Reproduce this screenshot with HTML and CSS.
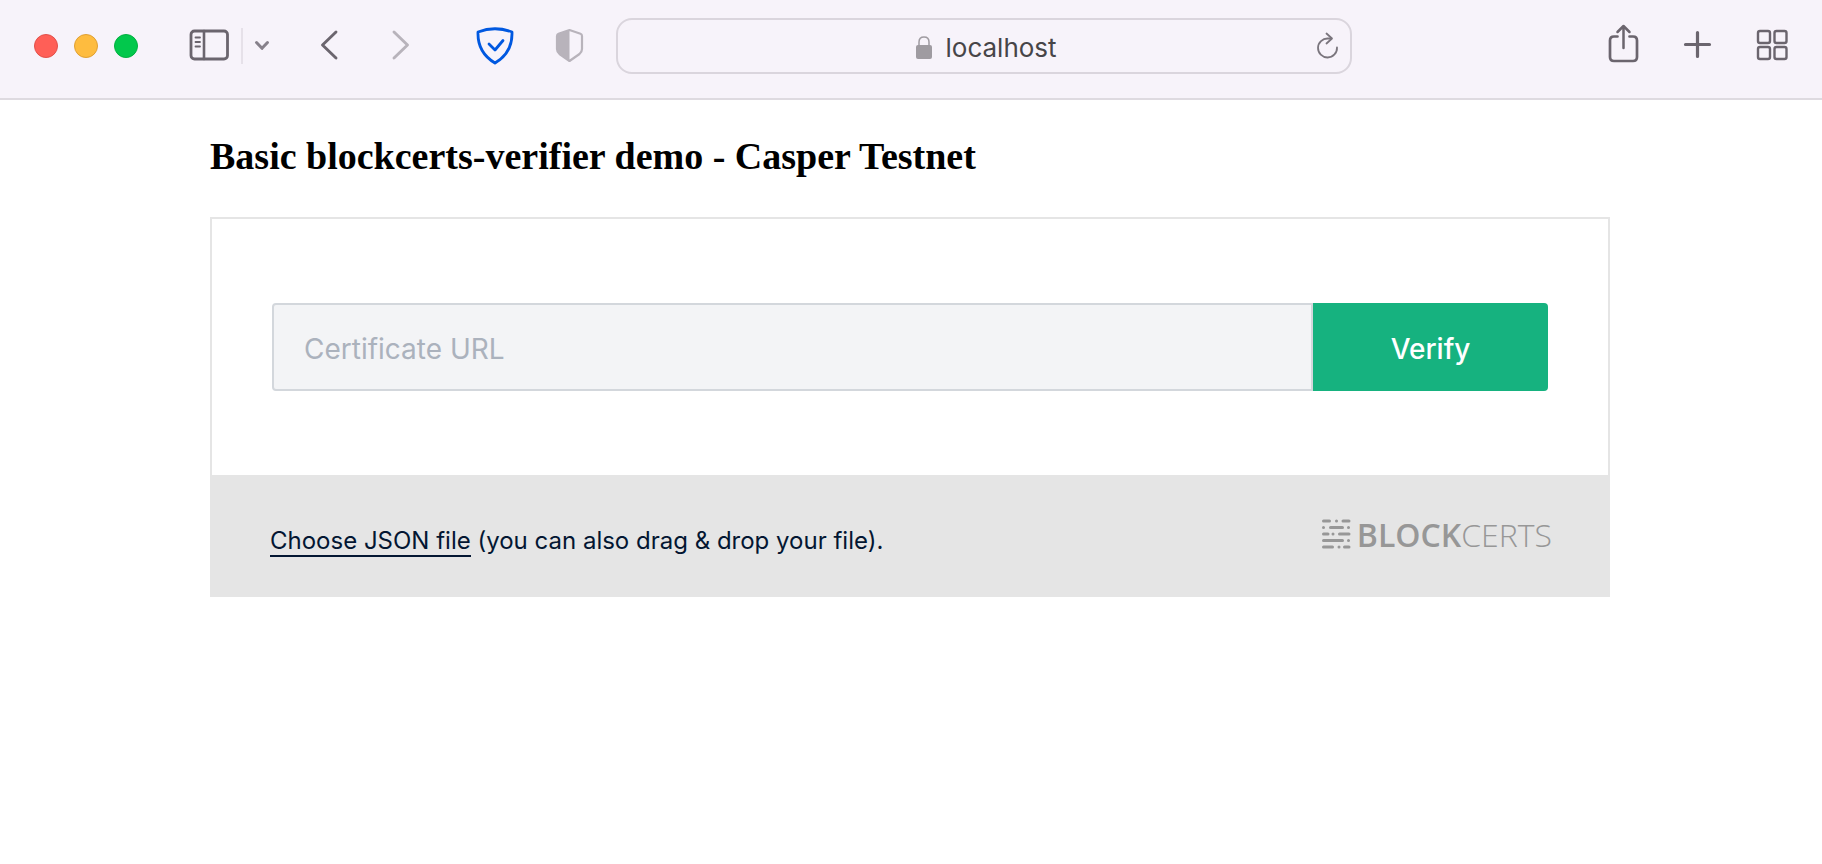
FILE: index.html
```html
<!DOCTYPE html>
<html lang="en">
<head>
<meta charset="utf-8">
<title>Basic blockcerts-verifier demo</title>
<link rel="stylesheet" href="styles.css">
</head>
<body>
<header class="toolbar">
  <div class="lights">
    <button class="light light-close" aria-label="Close"></button>
    <button class="light light-minimize" aria-label="Minimize"></button>
    <button class="light light-zoom" aria-label="Zoom"></button>
  </div>
  <div class="sidebar-tools">
    <button class="icon" aria-label="Show sidebar"><svg width="44" height="56" viewBox="188 18 44 56"><rect x="191" y="31" width="36.500" height="28" rx="3.500" stroke-width="2.800"/><path d="M204 31V59" stroke-width="2.600"/><path d="M195.500 37.500H200M195.500 42H200M195.500 46.500H200" stroke-width="1.800"/></svg></button>
    <span class="divider"></span>
    <button class="icon icon-soft" aria-label="Tab groups"><svg width="20" height="56" viewBox="252 18 20 56"><path d="M256.500 42.500L262 48.300L267.500 42.500" stroke-width="3"/></svg></button>
  </div>
  <nav class="history">
    <button class="icon" aria-label="Back"><svg width="24" height="56" viewBox="316 18 24 56"><path d="M336 32L322.500 45L336 58" stroke-width="2.900"/></svg></button>
    <button class="icon icon-off" aria-label="Forward"><svg width="24" height="56" viewBox="388 18 24 56"><path d="M394 32L407.500 45L394 58" stroke-width="2.900"/></svg></button>
  </nav>
  <div class="extensions">
    <button class="icon icon-blue" aria-label="Protection"><svg width="42" height="56" viewBox="474 18 42 56"><path d="M478 32Q495 25.500 512 32C512.500 46 506 56.500 495 63C484 56.500 477.500 46 478 32Z" stroke-width="2.800"/><path d="M489 44L495 50L503 40.500" stroke-width="2.800"/></svg></button>
    <button class="icon icon-off" aria-label="Privacy report"><svg width="32" height="56" viewBox="554 18 32 56"><path d="M569.500 30L580.500 33.700Q582 34.200 582 36V49Q582 52 579.500 54L569.500 61L559.500 54Q557 52 557 49V36Q557 34.200 558.500 33.700Z" stroke-width="2.200"/><path d="M569.500 30L558.500 33.700Q557 34.200 557 36V49Q557 52 559.500 54L569.500 61Z" fill="currentColor" stroke="none"/></svg></button>
  </div>
  <div class="address">
    <div class="address-center">
      <label class="lock" for="url"><svg width="18" height="52" viewBox="916 20 18 52" aria-label="Address"><rect x="917" y="45" width="16" height="14" rx="2" fill="currentColor" stroke="none"/><path d="M920 46V42Q920 37 925 37T930 42V46" stroke-width="1.500"/></svg></label>
      <input id="url" class="address-input" type="text" value="localhost">
    </div>
    <button class="icon reload" aria-label="Reload"><svg width="26" height="52" viewBox="1314 20 26 52"><path d="M1331 38.500H1328A9.500 9.500 0 1 0 1337 47.500" stroke-width="1.800"/><path d="M1326.500 33.500L1332 38.500L1326.500 43.500" stroke-width="1.800"/></svg></button>
  </div>
  <div class="actions">
    <button class="icon" aria-label="Share"><svg width="34" height="56" viewBox="1608 18 34 56"><path d="M1618.500 36.500H1615Q1611 36.500 1611 40.500V57Q1611 61 1615 61H1634Q1638 61 1638 57V40.500Q1638 36.500 1634 36.500H1630.500" stroke-width="2.700"/><path d="M1624.500 48V26.500M1618.500 32L1624.500 26L1630.500 32" stroke-width="2.500"/></svg></button>
    <button class="icon" aria-label="New tab"><svg width="32" height="56" viewBox="1682 18 32 56"><path d="M1685.500 44.500H1709.500M1697.500 32.500V56.500" stroke-width="3.200"/></svg></button>
    <button class="icon" aria-label="Tab overview"><svg width="34" height="56" viewBox="1755 18 34 56"><g stroke-width="2.400"><rect x="1758" y="31" width="12" height="12" rx="2"/><rect x="1774.500" y="31" width="12" height="12" rx="2"/><rect x="1758" y="47" width="12" height="12" rx="2"/><rect x="1774.500" y="47" width="12" height="12" rx="2"/></g></svg></button>
  </div>
</header>
<main class="page">
  <h1 class="title">Basic blockcerts-verifier demo - Casper Testnet</h1>
  <section class="verifier">
    <form class="verify-form">
      <input class="url-input" type="text" placeholder="Certificate URL" aria-label="Certificate URL">
      <button class="verify-button" type="button">Verify</button>
    </form>
    <footer class="verifier-footer">
      <p class="file-hint"><a class="file-link" href="#">Choose JSON file</a> (you can also drag &amp; drop your file).</p>
      <div class="brand">
        <svg class="brand-mark" width="30" height="32" viewBox="0 0 30 32"><path d="M2.500 3H8.500M15.500 3H15.510M22 3H28M2.500 9.500H2.510M9.500 9.500H21.500M27.500 9.500H27.510M2.500 16H7M12 16H12.010M18.500 16H28M2.500 22.500H21.500M27.500 22.500H27.510M2.500 29H11.500M18 29H18.010M23.500 29H28"/></svg>
        <span class="brand-name"><strong class="brand-bold">BLOCK</strong>CERTS</span>
      </div>
    </footer>
  </section>
</main>
</body>
</html>
```
FILE: styles.css
```css
* { box-sizing: border-box; }
body { margin: 0; background: #fff; font-family: Inter, "Liberation Sans", sans-serif; }
button, input { font-family: inherit; }
button { border: 0; padding: 0; background: none; }

.toolbar { display: flex; align-items: center; padding: 18px 33px 24px 34px; background: #f7f3fa; border-bottom: 2px solid #dedae0; }
.lights { display: flex; gap: 16px; margin-right: 50px; }
.light { width: 24px; height: 24px; border-radius: 50%; border: 1px solid; }
.light-close { background: #ff5f57; border-color: #e2504a; }
.light-minimize { background: #febc3f; border-color: #e0a033; }
.light-zoom { background: #02c84c; border-color: #02b040; }
.icon { display: block; color: #6b656e; }
.icon svg, .lock svg { display: block; fill: none; stroke: currentColor; stroke-linecap: round; stroke-linejoin: round; }
.icon-soft { color: #87818b; }
.icon-off { color: #b8b3bb; }
.icon-blue { color: #0058e0; }
.sidebar-tools { display: flex; align-items: center; gap: 9px; margin-right: 44px; }
.divider { width: 2px; height: 36px; background: #e6e1e9; }
.history { display: flex; gap: 48px; margin-right: 62px; }
.extensions { display: flex; gap: 38px; margin-right: 30px; }
.address { flex: 1; min-width: 0; display: grid; grid-template-columns: 1fr auto 1fr; align-items: center; border: 2px solid #dad5dd; border-radius: 16px; padding: 0 10px 0 16px; }
.address-center { grid-column: 2; display: flex; align-items: center; gap: 13px; }
.lock { color: #9f9ba1; }
.address-input { width: 114px; padding: 4px 0 0; border: 0; background: none; color: #474548; font-size: 26px; line-height: 32px; }
.reload { justify-self: end; color: #7a757d; }
.actions { display: flex; gap: 41px; margin-left: 255px; }

.page { padding: 34px 212px 40px 210px; }
.title { margin: 0 0 39px; font: bold 38px/44px "Liberation Serif", serif; color: #000; }
.verifier { border: 2px solid #e5e5e5; }
.verify-form { display: flex; padding: 84px 60px; }
.url-input { flex: 1; min-width: 0; height: 88px; padding: 3px 30px 0; border: 2px solid #d3d7dc; border-radius: 4px 0 0 4px; background: #f3f4f6; font-size: 28px; }
.url-input::placeholder { color: #abb2bd; }
.verify-button { width: 235px; height: 88px; padding-top: 3px; border-radius: 0 4px 4px 0; background: #16b27f; color: #fff; font-size: 28px; font-weight: 500; }
.verifier-footer { display: flex; justify-content: space-between; align-items: flex-start; padding: 43px 56px 38px 58px; background: #e5e5e5; }
.file-hint { margin: 7px 0 0; font-size: 24px; line-height: 32px; color: #031632; }
.file-link { color: inherit; text-decoration: none; border-bottom: 2px solid; }
.brand { display: flex; align-items: flex-start; gap: 6px; color: #979797; }
.brand-mark { fill: none; stroke: currentColor; stroke-width: 3; stroke-linecap: round; }
.brand-name { padding-top: 1px; font: 300 32px/32px "Open Sans", sans-serif; }
.brand-bold { font-weight: 600; }
```
